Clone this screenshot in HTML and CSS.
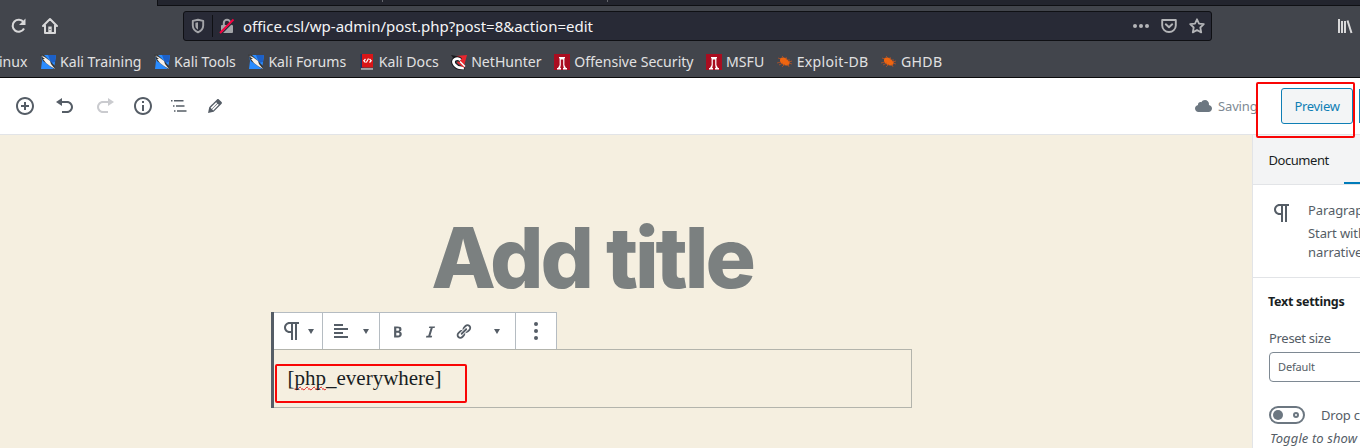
FILE: index.html
```html
<!DOCTYPE html>
<html lang="en">
<head>
<meta charset="utf-8">
<title>Edit Post</title>
<link rel="stylesheet" href="styles.css">
</head>
<body>
<svg width="0" height="0" class="defs" aria-hidden="true">
  <symbol id="kali" viewBox="0 0 16 16"><path fill="#2a8cff" d="M1 1h15l-2 14H1l1-8z"/><path fill="#1c60c8" d="M8 1h8l-1 7-4 1z"/><path fill="#333" d="M0 0l4 1 11 11-1 3L3 7z"/><path fill="#f6f1ea" d="M0 0l6 4 4 3 1 3 4 5-5-3-4-3-3-4 2 0-4-3 3 1z"/></symbol>
  <symbol id="offsec" viewBox="0 0 16 16"><path fill="#a90d20" d="M0 0h16v16H0z"/><path fill="#fff" d="M5 3h6v1.200h-.6V11l1.600 3h1v1.500H9V14h.8l-.6-3V5.500H6.800V11l-.6 3H7v1.500H3V14h1l1.600-3V4.200H5z"/></symbol>
  <symbol id="bug" viewBox="0 0 16 16"><path fill="#ee6510" d="M3 4.500c3-2.500 7 0 8.500 2.500l1.500.5-1 3.500c-3 1.500-7 0-9-3.500z"/><path fill="none" stroke="#b65224" stroke-width=".8" d="M1 4l3 1M0 9l4-1M2 11l4-2M5 13l3-3M9 3l1 3M12 5v3l3-1M12 9l3 1M11 10l1 3M5 2l2 2"/></symbol>
  <symbol id="pilcrow" viewBox="0 0 24 24"><path d="M11 5v7H9.500C7.600 12 6 10.400 6 8.500S7.600 5 9.500 5H11m8-2H9.500C6.500 3 4 5.500 4 8.500S6.500 14 9.500 14H11v7h2V5h2v16h2V5h2V3z"/></symbol>
</svg>

<div class="tabstrip"><i></i><i></i></div>
<nav class="navbar">
  <svg class="reload" width="18" height="18" viewBox="0 0 18 18"><path fill="none" stroke="#d8d8d9" stroke-width="2.100" d="M13.500 5.200A6 6 0 1 0 14 11.500"/><path fill="#d8d8d9" d="M15.500 1.500v6.500H9z"/></svg>
  <svg class="home" width="18" height="18" viewBox="0 0 18 18"><path fill="none" stroke="#d8d8d9" stroke-width="2" stroke-linejoin="round" stroke-linecap="round" d="M2 9l7-7 7 7M4 8.500V16h10V8.500"/><path fill="#d8d8d9" d="M7.300 9.500h3.400V16H7.300z"/><path fill="#42454c" d="M8.500 12h1v1h-1z"/></svg>
  <div class="urlbar">
    <svg class="shield" width="14" height="16" viewBox="0 0 14 16"><path fill="none" stroke="#a3a4a8" stroke-width="1.900" stroke-linejoin="round" d="M7 1.700l5.200 1.200v4.600c0 3-1.700 5.200-5.200 6.800-3.500-1.600-5.200-3.800-5.200-6.800V2.900z"/><path fill="#a3a4a8" d="M7 4.200l-2.600.6v3c0 1.600.8 2.800 2.600 4z"/></svg>
    <span class="divider"></span>
    <svg class="lock" width="16" height="16" viewBox="0 0 16 16"><path fill="none" stroke="#a3a4a8" stroke-width="2" d="M4.800 8V5a3.200 3.200 0 0 1 6.400 0v3"/><rect x="2" y="7" width="12" height="8" rx="1" fill="#a3a4a8"/><path stroke="#282a36" stroke-width="1.500" d="M2.500 15.500L15.500 2.500"/><path stroke="#f5003f" stroke-width="1.900" d="M1 15L14.500 1.500"/></svg>
    <span class="url">office.csl/wp-admin/post.php?post=8&amp;action=edit</span>
    <svg class="dots" width="16" height="4" viewBox="0 0 16 4" fill="#b4b5b8"><circle cx="2" cy="2" r="2"/><circle cx="8" cy="2" r="2"/><circle cx="14" cy="2" r="2"/></svg>
    <svg class="pocket" width="16" height="16" viewBox="0 0 16 16" fill="none" stroke="#b4b5b8" stroke-width="1.900" stroke-linejoin="round" stroke-linecap="round"><path d="M1.200 2h13.600v5.500a6.800 6.500 0 0 1-13.600 0z"/><path d="M4.800 6.300L8 9.300l3.200-3"/></svg>
    <svg class="star" width="16" height="16" viewBox="0 0 16 16"><path fill="none" stroke="#b4b5b8" stroke-width="1.800" stroke-linejoin="round" d="M8 1.300l2 4.300 4.800.6-3.500 3.300.9 4.900L8 12l-4.200 2.400.9-4.900L1.200 6.200 6 5.600z"/></svg>
  </div>
  <svg class="library" width="16" height="16" viewBox="0 0 16 16" fill="none" stroke="#d8d8d9" stroke-width="2"><path d="M2 1v14M5 3v12M8 3v12M10.500 2.500l4 12.500"/></svg>
</nav>
<div class="bookmarks">
  <span class="bm first">Linux</span>
  <span class="bm"><svg><use href="#kali"/></svg>Kali Training</span>
  <span class="bm"><svg><use href="#kali"/></svg>Kali Tools</span>
  <span class="bm"><svg><use href="#kali"/></svg>Kali Forums</span>
  <span class="bm"><svg viewBox="0 0 16 16"><path fill="#1d3266" d="M1.500 0h3v14h-3z"/><path fill="#d91518" d="M3 0h11v13.500H3z"/><path fill="#b9babd" d="M2 14.200h12v1.500H2z"/><path fill="none" stroke="#fff" stroke-width="1.200" d="M6.500 5L4.800 6.800l1.700 1.700M7.300 8.500l2.200-4M10.500 5l1.700 1.700-1.700 1.800"/></svg>Kali Docs</span>
  <span class="bm"><svg viewBox="0 0 16 16"><path fill="#e8262e" d="M5 2l11-1-3 11z"/><path fill="#17181c" d="M0 1l5 1 3 2-5 1z"/><path fill="none" stroke="#17181c" stroke-width="4.600" d="M9.500 6C6 3 0 6 3.500 10.500S9 13.500 13.500 14"/><path fill="none" stroke="#fff" stroke-width="2.800" d="M9.500 6C6 3 0 6 3.500 10.500S9 13.500 13 14"/><path stroke="#e8262e" stroke-width="2" d="M6.500 8l7 5"/><path stroke="#fff" stroke-width="1.500" d="M9 7.500l5 5"/></svg>NetHunter</span>
  <span class="bm"><svg><use href="#offsec"/></svg>Offensive Security</span>
  <span class="bm"><svg><use href="#offsec"/></svg>MSFU</span>
  <span class="bm wide"><svg><use href="#bug"/></svg>Exploit-DB</span>
  <span class="bm wide"><svg><use href="#bug"/></svg>GHDB</span>
</div>

<header class="editor-header">
  <div class="tools">
    <svg viewBox="0 0 20 20"><path d="M10 1c-5 0-9 4-9 9s4 9 9 9 9-4 9-9-4-9-9-9zm0 16c-3.900 0-7-3.100-7-7s3.100-7 7-7 7 3.100 7 7-3.100 7-7 7zm1-11H9v3H6v2h3v3h2v-3h3V9h-3V6z"/></svg>
    <svg viewBox="0 0 20 20"><path d="M12 5H7V2L1 6l6 4V7h5c2.200 0 4 1.800 4 4s-1.800 4-4 4H7v2h5c3.300 0 6-2.700 6-6s-2.700-6-6-6z"/></svg>
    <svg class="disabled" viewBox="0 0 20 20"><path d="M8 5h5V2l6 4-6 4V7H8c-2.200 0-4 1.800-4 4s1.800 4 4 4h5v2H8c-3.300 0-6-2.700-6-6s2.700-6 6-6z"/></svg>
    <svg class="info" viewBox="0 0 20 20"><path d="M10 1c-5 0-9 4-9 9s4 9 9 9 9-4 9-9-4-9-9-9zm0 16c-3.900 0-7-3.100-7-7s3.100-7 7-7 7 3.100 7 7-3.100 7-7 7zM9 5h2v2H9zM9 9h2v6H9z"/></svg>
    <svg class="outline" viewBox="0 0 20 20"><path d="M2 4h1.500v1.500H2zM5 4h9.500v1.500H5zM4 9.200h1.500v1.500H4zM7 9.200h8.500v1.500H7zM5 14.300h1.500v1.500H5zM8 14.300h9.500v1.500H8z"/></svg>
    <svg class="edit" viewBox="0 0 20 20"><path d="M13.890 3.390l2.710 2.720c.46.46.42 1.240.03 1.640l-8.010 8.020-5.560 1.160 1.160-5.580s7.600-7.630 7.990-8.030c.39-.39 1.220-.39 1.680.07zm-2.730 2.790l-5.590 5.610 1.110 1.110 5.540-5.650zm-2.970 8.230l5.580-5.600-1.070-1.080-5.590 5.600z"/></svg>
  </div>
  <div class="actions">
    <svg viewBox="0 0 20 20" width="20" height="20"><path d="M14.900 9c1.800.2 3.100 1.700 3.100 3.500 0 1.900-1.600 3.500-3.500 3.500h-10C2.600 16 1 14.400 1 12.500 1 10.700 2.300 9.300 4.100 9 4 8.900 4 8.700 4 8.500 4 7.100 5.100 6 6.500 6c.3 0 .7.1.9.2C8.100 4.900 9.400 4 11 4c2.200 0 4 1.800 4 4 0 .4-.1.7-.1 1z"/></svg>
    <span class="saving">Saving</span>
    <span class="preview">Preview</span>
    <span class="publish"></span>
  </div>
</header>

<div class="workspace">
  <main class="canvas">
    <h1 class="title">Add title</h1>
    <section class="block">
      <div class="toolbar">
        <div class="group type"><svg width="24" height="24"><use href="#pilcrow"/></svg><b class="caret"></b></div>
        <div class="group align"><svg width="20" height="20" viewBox="0 0 20 20"><path d="M12 5V3H3v2h9zm5 4V7H3v2h14zm-5 4v-2H3v2h9zm5 4v-2H3v2h14z"/></svg><b class="caret"></b></div>
        <div class="group format">
          <svg width="17" height="17" viewBox="0 0 20 20"><path d="M6 4v13h4.540c1.370 0 2.460-.33 3.260-1 .8-.66 1.200-1.580 1.200-2.770 0-.84-.17-1.510-.51-2.010s-.9-.85-1.670-1.030v-.09c.57-.1 1.020-.4 1.360-.9s.51-1.130.51-1.910c0-1.140-.39-1.980-1.170-2.500C12.750 4.260 11.500 4 9.780 4H6zm2.570 5.150V6.260h1.360c.73 0 1.270.11 1.610.32.34.22.51.58.51 1.070 0 .54-.16.92-.47 1.150s-.82.35-1.510.35h-1.500zm0 2.190h1.600c1.440 0 2.160.53 2.160 1.610 0 .6-.17 1.050-.51 1.340s-.86.43-1.570.43H8.570v-3.380z"/></svg>
          <svg width="17" height="17" viewBox="0 0 20 20"><path d="M14.780 6h-2.130l-2.800 9h2.120l-.62 2H4.600l.62-2h2.140l2.800-9H8.030l.62-2h6.750z"/></svg>
          <svg width="17" height="17" viewBox="0 0 20 20"><path d="M17.740 2.760c1.680 1.690 1.680 4.410 0 6.100l-1.530 1.520c-1.120 1.120-2.700 1.470-4.140 1.090l2.620-2.610.76-.77.76-.76c.84-.84.84-2.200 0-3.040-.84-.85-2.200-.85-3.040 0l-.77.76-3.380 3.380c-.37-1.440-.02-3.020 1.100-4.140l1.520-1.530c1.690-1.680 4.420-1.680 6.100 0zM8.590 13.430l5.340-5.340c.42-.42.42-1.100 0-1.520-.44-.43-1.130-.39-1.530 0l-5.330 5.340c-.42.42-.42 1.100 0 1.520.44.43 1.130.39 1.520 0zm-.76 2.290l4.140-4.150c.38 1.440.03 3.020-1.090 4.140l-1.520 1.530c-1.690 1.680-4.410 1.680-6.100 0-1.680-1.680-1.680-4.420 0-6.100l1.530-1.520c1.120-1.120 2.700-1.470 4.140-1.100l-4.140 4.150c-.85.84-.85 2.200 0 3.050.84.84 2.200.84 3.040 0z"/></svg>
          <b class="caret"></b>
        </div>
        <div class="group more"><svg width="4" height="20" viewBox="0 0 4 20"><circle cx="2" cy="3" r="2"/><circle cx="2" cy="10" r="2"/><circle cx="2" cy="17" r="2"/></svg></div>
      </div>
      <p class="paragraph">[<span class="misspelt">php</span>_everywhere]</p>
      <div class="mark mark-code"></div>
    </section>
  </main>
  <aside class="sidebar">
    <div class="tabs"><span class="tab">Document</span><span class="tab active"></span></div>
    <div class="card">
      <svg width="24" height="24"><use href="#pilcrow"/></svg>
      <div><div class="name">Paragraph</div><div class="desc">Start with the<br>narrative.</div></div>
    </div>
    <div class="panel">
      <h2>Text settings</h2>
      <label>Preset size</label>
      <div class="select">Default</div>
      <div class="toggle-row"><span class="toggle"><i class="knob"></i><i class="ring"></i></span><span>Drop cap</span></div>
      <p class="help">Toggle to show</p>
    </div>
  </aside>
</div>
<div class="mark mark-preview"></div>
</body>
</html>
```
FILE: styles.css
```css
* { box-sizing: border-box; }
body { margin: 0; width: 1360px; height: 448px; overflow: hidden; position: relative; background: #42454c; font: 13px/1.4 "Noto Sans", sans-serif; color: #555d66; }
svg { display: block; flex: none; }
.defs { position: absolute; }

/* browser chrome */
.tabstrip { height: 6px; margin-left: 157px; background: #23252e; border-left: 1px solid #0f1014; border-bottom: 1px solid #0f1014; display: flex; padding-left: 224px; gap: 224px; }
.tabstrip i { width: 1px; height: 2px; background: #65676d; }
.navbar { height: 40px; display: flex; align-items: center; padding: 0 7px 0 10px; }
.home { margin-left: 13px; }
.urlbar { margin-left: 124px; width: 1029px; height: 30px; border: 1px solid #0f1014; border-radius: 3px; background: #282a36; display: flex; align-items: center; padding: 0 6px 0 7px; }
.divider { width: 1px; height: 22px; background: #0f1014; margin: 0 7px 0 7px; }
.lock { margin-left: -1px; }
.url { font-size: 15px; line-height: 20px; color: #f5f5f6; margin-left: 8px; flex: 1; }
.pocket { margin-left: 12px; }
.star { margin-left: 12px; }
.library { margin-left: auto; }
.bookmarks { height: 32px; display: flex; align-items: center; gap: 12.5px; border-bottom: 1px solid #0c0c0d; color: #e1e1e2; font-size: 14.1px; line-height: 20px; white-space: nowrap; }
.bm { display: flex; align-items: center; gap: 4px; flex: none; }
.bm svg { width: 16px; height: 16px; }
.first { width: 27.5px; justify-content: flex-end; }
.wide { letter-spacing: .3px; }

/* editor header */
.editor-header { height: 57px; background: #fff; border-bottom: 1px solid #e2e4e7; display: flex; align-items: center; justify-content: space-between; padding-left: 15px; }
.tools { display: flex; gap: 20px; fill: #555d66; }
.tools svg { width: 20px; height: 20px; }
.tools .disabled { fill: #cacbcf; }
.tools .info { margin-left: -2px; }
.tools .outline { margin-left: -4px; }
.tools .edit { margin-left: -4px; }
.actions { display: flex; align-items: center; width: 167px; fill: #6c7781; color: #7e8993; }
.actions svg { margin-left: 1px; }
.saving { margin-left: 4px; width: 63px; letter-spacing: -.15px; }
.preview { width: 72px; height: 36px; line-height: 34px; text-align: center; letter-spacing: -.3px; border: 1px solid #0f7fb5; border-radius: 3px; background: #f3f5f6; color: #0f7fb5; }
.publish { width: 1px; height: 34px; background: #0f7fb5; margin-left: auto; }

/* canvas */
.workspace { display: flex; height: 313px; }
.canvas { width: 1252px; background: #f5efe0; overflow: hidden; }
.title { margin: 73px 0 0; padding-right: 68px; text-align: center; font: 800 84px/100px Inter, sans-serif; letter-spacing: -3.15px; color: #7b8080; }
.block { position: relative; width: 641px; height: 96px; margin: 4px 0 0 271px; border-left: 3px solid #555d66; }
.toolbar { display: flex; width: 283px; height: 38px; background: #fff; border: 1px solid #b5bcc2; border-left: 0; fill: #555d66; }
.group { display: flex; align-items: center; border-right: 1px solid #b5bcc2; }
.group:last-child { border-right: 0; }
.caret { border: 3px solid transparent; border-top: 5px solid #555d66; border-bottom: 0; }
.type { width: 49px; padding-left: 6px; }
.type .caret { margin-left: 4px; }
.align { width: 57px; padding-left: 8px; }
.align .caret { margin-left: 12px; }
.format { width: 136px; padding-left: 9.3px; gap: 16px; }
.format .caret { margin-left: 5.7px; }
.more { flex: 1; justify-content: center; }
.paragraph { margin: -1px 0 0; height: 59px; border: 1px solid #b3b4ac; border-left: 0; padding: 13px 0 0 13.5px; font: 21px/31px "Liberation Serif", serif; color: #191e23; }
.misspelt { text-decoration: underline wavy #e01b1b 1px; text-decoration-skip-ink: none; text-underline-offset: 1px; }
.mark { position: absolute; border: 2px solid #f90505; border-radius: 2px; }
.mark-code { left: 1px; top: 52px; width: 192px; height: 39px; }
.mark-preview { left: 1256px; top: 82px; width: 99px; height: 56px; }

/* sidebar */
.sidebar { width: 108px; overflow: hidden; background: #fff; border-left: 1px solid #e2e4e7; white-space: nowrap; }
.tabs { display: flex; height: 50px; background: #f3f4f5; border-bottom: 1px solid #e2e4e7; }
.tab { width: 91px; flex: none; padding-left: 15.5px; line-height: 51px; letter-spacing: -.45px; color: #191e23; }
.tab.active { border-bottom: 2px solid #007cba; }
.card { display: flex; gap: 14px; height: 93px; padding: 16px 0 0 17px; border-bottom: 1px solid #e2e4e7; fill: #555d66; }
.name { line-height: 19px; letter-spacing: -.1px; }
.desc { margin-top: 4px; line-height: 19px; letter-spacing: -.1px; }
.panel { padding: 14px 0 0 15px; }
.panel h2 { margin: 0 0 18px; font-size: 12.5px; line-height: 19px; letter-spacing: -.28px; color: #191e23; }
.panel label { display: block; line-height: 19px; margin: 0 0 4px 1px; letter-spacing: -.3px; }
.select { width: 220px; height: 30px; margin-left: 1px; border: 1px solid #7e8993; border-radius: 4px; padding-left: 8px; font-size: 11px; line-height: 28px; letter-spacing: -.15px; }
.toggle-row { display: flex; align-items: center; gap: 16px; margin: 24px 0 0 1px; line-height: 18px; letter-spacing: -.2px; }
.toggle { flex: none; width: 36px; height: 18px; border: 2px solid #6c7781; border-radius: 9px; display: flex; align-items: center; justify-content: space-between; padding: 0 4px 0 2px; }
.knob { width: 10px; height: 10px; border-radius: 50%; background: #6c7781; }
.ring { width: 6px; height: 6px; border-radius: 50%; border: 2px solid #6c7781; }
.help { margin: 5px 0 0 2px; font-style: italic; line-height: 18px; letter-spacing: .1px; }
```
